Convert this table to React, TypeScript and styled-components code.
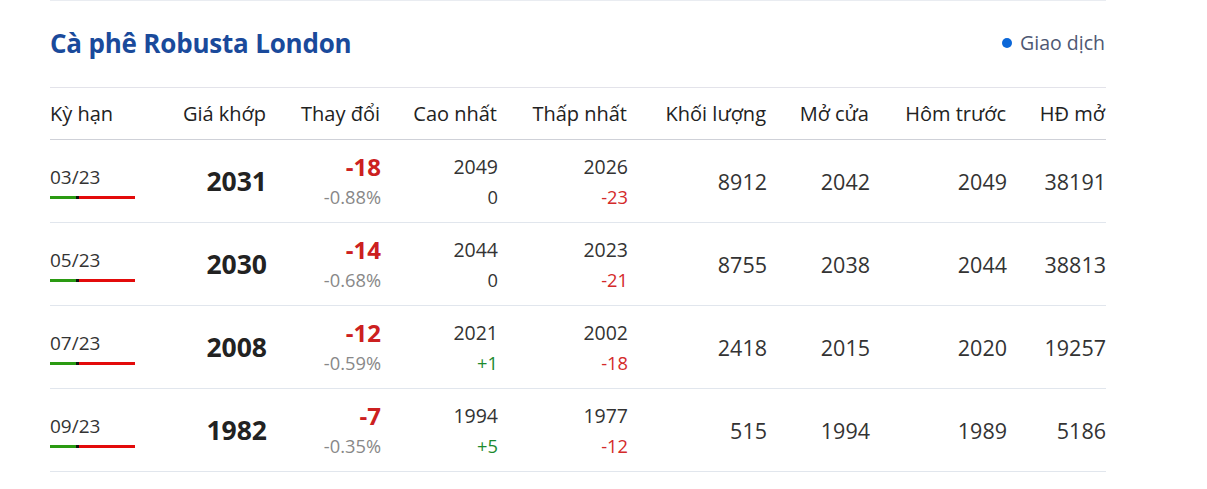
import React from "react";
import styled, { createGlobalStyle } from "styled-components";

const Global = createGlobalStyle`
  html, body { margin: 0; padding: 0; background: #fff; }
  body { font-family: "Open Sans", "Noto Sans", sans-serif; color: #222; }
`;

const Wrapper = styled.div`
  margin-left: 50px;
  width: 1056px;
  border-top: 1px solid #e9ecf1;
`;

const TitleBar = styled.div`
  box-sizing: border-box;
  height: 86px;
  padding-bottom: 3px;
  display: flex;
  align-items: center;
  justify-content: space-between;
`;

const Title = styled.h2`
  margin: 0;
  font-size: 26px;
  font-weight: 700;
  color: #1a4a9b;
  letter-spacing: -0.2px;
`;

const Status = styled.div`
  display: flex;
  align-items: center;
  gap: 8px;
  font-size: 19.5px;
  color: #4e5873;
  padding-right: 1px;
`;

const Dot = styled.span`
  width: 10px;
  height: 10px;
  border-radius: 50%;
  background: #0b67d8;
`;

const COLS = "100px 117px 114px 117px 130px 139px 103px 137px 99px";

const HeadRow = styled.div`
  display: grid;
  grid-template-columns: ${COLS};
  height: 51px;
  align-items: center;
  border-top: 1px solid #e3e3ea;
  border-bottom: 1px solid #cfd1d8;
`;

const HeadCell = styled.div<{ $left?: boolean }>`
  font-size: 20px;
  color: #222;
  text-align: ${(p) => (p.$left ? "left" : "right")};
  padding-right: ${(p) => (p.$left ? "0" : "1px")};
  white-space: nowrap;
`;

const Row = styled.div`
  display: grid;
  grid-template-columns: ${COLS};
  height: 82px;
  align-items: center;
  border-bottom: 1px solid #e1e6ed;
`;

const Cell = styled.div`
  text-align: right;
  display: flex;
  flex-direction: column;
  align-items: flex-end;
  white-space: nowrap;
`;

const DateCell = styled.div`
  display: flex;
  flex-direction: column;
  align-items: flex-start;
  padding-top: 2px;
`;

const DateText = styled.span`
  font-size: 19px;
  color: #333;
  line-height: 24px;
`;

const Bar = styled.div`
  margin-top: 7px;
  width: 85px;
  height: 3px;
  display: flex;
`;

const BarSeg = styled.span<{ $c: string; $w: number }>`
  background: ${(p) => p.$c};
  width: ${(p) => p.$w}px;
  height: 100%;
`;

const Price = styled.span`
  font-size: 26.5px;
  font-weight: 700;
  color: #222;
`;

const Change = styled.span`
  font-size: 24px;
  font-weight: 700;
  color: #cc2020;
  line-height: 28px;
`;

const Pct = styled.span`
  font-size: 18.3px;
  color: #888;
  line-height: 26px;
  margin-top: 3px;
`;

const Top = styled.span`
  font-size: 19.5px;
  color: #333;
  line-height: 28px;
`;

const Sub = styled.span<{ $tone: "up" | "down" | "flat" }>`
  font-size: 18.3px;
  line-height: 26px;
  margin-top: 3px;
  color: ${(p) => (p.$tone === "up" ? "#1c8a2e" : p.$tone === "down" ? "#d42a2a" : "#333")};
`;

const Single = styled.span`
  font-size: 21.5px;
  color: #333;
`;

type R = {
  date: string;
  price: string;
  chg: string;
  pct: string;
  hi: string;
  hiChg: string;
  lo: string;
  loChg: string;
  vol: string;
  open: string;
  prev: string;
  oi: string;
};

const rows: R[] = [
  { date: "03/23", price: "2031", chg: "-18", pct: "-0.88%", hi: "2049", hiChg: "0", lo: "2026", loChg: "-23", vol: "8912", open: "2042", prev: "2049", oi: "38191" },
  { date: "05/23", price: "2030", chg: "-14", pct: "-0.68%", hi: "2044", hiChg: "0", lo: "2023", loChg: "-21", vol: "8755", open: "2038", prev: "2044", oi: "38813" },
  { date: "07/23", price: "2008", chg: "-12", pct: "-0.59%", hi: "2021", hiChg: "+1", lo: "2002", loChg: "-18", vol: "2418", open: "2015", prev: "2020", oi: "19257" },
  { date: "09/23", price: "1982", chg: "-7", pct: "-0.35%", hi: "1994", hiChg: "+5", lo: "1977", loChg: "-12", vol: "515", open: "1994", prev: "1989", oi: "5186" },
];

const tone = (v: string) => (v.startsWith("+") ? "up" : v.startsWith("-") ? "down" : "flat");

const heads = ["Giá khớp", "Thay đổi", "Cao nhất", "Thấp nhất", "Khối lượng", "Mở cửa", "Hôm trước", "HĐ mở"];

export default function App() {
  return (
    <>
      <Global />
      <Wrapper>
        <TitleBar>
          <Title>Cà phê Robusta London</Title>
          <Status>
            <Dot />
            Giao dịch
          </Status>
        </TitleBar>
        <HeadRow>
          <HeadCell $left>Kỳ hạn</HeadCell>
          {heads.map((h) => (
            <HeadCell key={h}>{h}</HeadCell>
          ))}
        </HeadRow>
        {rows.map((r) => (
          <Row key={r.date}>
            <DateCell>
              <DateText>{r.date}</DateText>
              <Bar>
                <BarSeg $c="#2a9a12" $w={26} />
                <BarSeg $c="#111" $w={3} />
                <BarSeg $c="#e30b0b" $w={56} />
              </Bar>
            </DateCell>
            <Cell>
              <Price>{r.price}</Price>
            </Cell>
            <Cell>
              <Change>{r.chg}</Change>
              <Pct>{r.pct}</Pct>
            </Cell>
            <Cell>
              <Top>{r.hi}</Top>
              <Sub $tone={tone(r.hiChg)}>{r.hiChg}</Sub>
            </Cell>
            <Cell>
              <Top>{r.lo}</Top>
              <Sub $tone={tone(r.loChg)}>{r.loChg}</Sub>
            </Cell>
            <Cell>
              <Single>{r.vol}</Single>
            </Cell>
            <Cell>
              <Single>{r.open}</Single>
            </Cell>
            <Cell>
              <Single>{r.prev}</Single>
            </Cell>
            <Cell>
              <Single>{r.oi}</Single>
            </Cell>
          </Row>
        ))}
      </Wrapper>
    </>
  );
}
